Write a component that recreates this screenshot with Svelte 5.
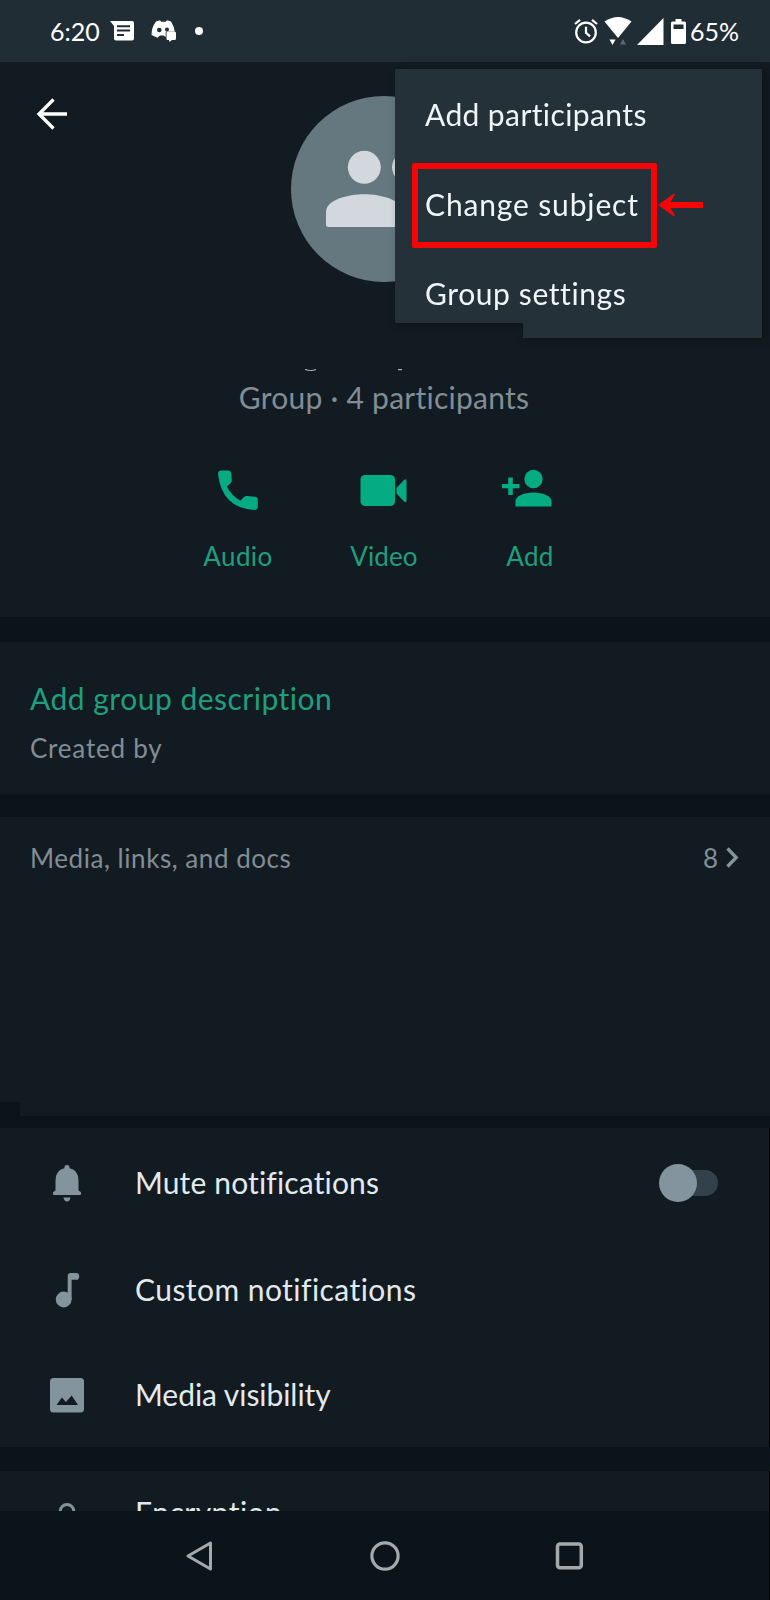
<script>
    const menuItems = [
        { label: "Add participants", spacing: 0.4 },
        { label: "Change subject", spacing: 0.85 },
        { label: "Group settings", spacing: 0.6 }
    ];

    let muted = false;
</script>

<main>
    <header class="status-bar">
        <span class="clock">6:20</span>
        <svg class="s-message" width="25" height="22" viewBox="0 0 25 22">
            <path fill="#fff" d="M0 1h22q2 0 2 2v15.500q0 2-2 2H6q-2 0-2-2V6z" />
            <path stroke="#212d35" stroke-width="2" d="M7 6.300h13M7 10.600h13M7 15h7" />
        </svg>
        <svg class="s-discord" width="26" height="24" viewBox="0 0 26 24">
            <path fill="#fff" d="M5 2.500 9 1.200l1.200 1.500h4.600L16 1.200l4 1.300q3.200 5 3.700 10h-9v5.500l-2.200-1.500H9l-2.500 2.300L.5 16Q.4 8.500 5 2.500z" />
            <circle cx="8.300" cy="11" r="2.300" fill="#212d35" />
            <circle cx="16" cy="10.500" r="2" fill="#212d35" />
            <path fill="#fff" d="M16.500 12.500h7q1.500 0 1.500 1.500v5.500q0 1.500-1.500 1.500H21l-2.500 2-.5-2h-1.500q-1 0-1-1.500V14q0-1.500 1-1.500z" />
        </svg>
        <span class="dot"></span>

        <div class="status-right">
            <svg class="s-alarm" width="24" height="26" viewBox="0 0 24 26">
                <g fill="none" stroke="#fff" stroke-width="2.200">
                    <circle cx="12" cy="14.500" r="9.800" />
                    <path d="M12 8.800v6l4 3.500M1 6 6 1.900M23 6l-5-4.100" />
                </g>
            </svg>
            <svg class="s-wifi" width="28" height="30" viewBox="0 0 28 30">
                <path fill="#fff" d="M.5 5.500Q14-3.500 27.500 5.500L14 22z" />
                <path fill="#fff" d="M5.500 23.500h6L8.500 29z" />
                <path fill="#5d686e" d="M16 28.500h6L19 23z" />
            </svg>
            <svg class="s-signal" width="27" height="27" viewBox="0 0 27 27">
                <path fill="#fff" d="M26.500 0v27H0z" />
            </svg>
            <svg class="s-battery" width="15" height="25" viewBox="0 0 15 25">
                <path fill="#fff" d="M4.500 0h6v2.500h3q1.500 0 1.500 1.500v19.500q0 1.500-1.500 1.500h-12Q0 25 0 23.500V4q0-1.500 1.500-1.500h3z" />
                <path fill="#212d35" d="M2.500 5.500h10V10h-10z" />
            </svg>
            <span class="percent">65%</span>
        </div>
    </header>

    <section class="profile">
        <div class="profile-top">
            <button class="back" aria-label="Back">
                <svg width="32" height="32" viewBox="0 0 32 32">
                    <path fill="none" stroke="#fff" stroke-width="3.300" d="M31 16H3M17.500 1.500 3 16l14.500 14.500" />
                </svg>
            </button>
            <svg class="avatar" width="186" height="186" viewBox="0 0 186 186">
                <circle cx="93" cy="93" r="93" fill="#66787f" />
                <g fill="#d2d8de">
                    <circle cx="73.300" cy="71.300" r="16.500" />
                    <path d="M35 116c0-12 22-17.700 38.300-17.700S111.600 104 111.600 116v15H37.500q-2.500 0-2.500-2.500z" />
                    <circle cx="117.500" cy="71.300" r="16.500" />
                </g>
            </svg>
        </div>
        <!-- bottom edge of the hidden group name -->
        <svg class="name-rest" width="100" height="4" viewBox="0 0 100 4">
            <path fill="none" stroke="#a9b0b5" stroke-width="1.200" d="M1 .5q6 2 11 0M94 .7h4" />
        </svg>
        <p class="members">Group · 4 participants</p>

        <div class="actions">
            <button class="action audio">
                <svg width="50" height="44" viewBox="0 0 50 44">
                    <path fill="#05ab83" d="M8 2.500h7.500q2.500 0 2.700 2.500l.6 7q.1 2-1.200 3.200l-3.800 3.600q5 9 13.500 14l3.700-3.800q1.200-1.200 3.200-1l8 .8q2.600.3 2.600 2.800v7q0 3.300-3.300 3.300Q9 40.500 5 6q0-3.500 3-3.500z" />
                </svg>
                <span>Audio</span>
            </button>
            <button class="action video">
                <svg width="50" height="44" viewBox="0 0 50 44">
                    <rect x="1.500" y="7" width="34.500" height="31" rx="4.500" fill="#05ab83" />
                    <path fill="#05ab83" d="M37.500 20 45 12q2.500-1.800 2.500.8v20q0 2.600-2.500.8L37.500 25.500z" />
                </svg>
                <span>Video</span>
            </button>
            <button class="action add">
                <svg width="50" height="44" viewBox="3 0 50 44">
                    <g fill="#05ab83">
                        <circle cx="31.500" cy="11" r="9.200" />
                        <path d="M13.500 38.500V33c0-5 9-8.500 18-8.500s18 3.500 18 8.500v5.500z" />
                        <path d="M6.200 9.500h4.600V16h6.700v4.300h-6.700V27H6.200v-6.700H0V16h6.200z" />
                    </g>
                </svg>
                <span>Add</span>
            </button>
        </div>
    </section>

    <section class="description">
        <p class="add-description">Add group description</p>
        <p class="created">Created by</p>
    </section>

    <section class="media">
        <div class="media-row">
            <span class="media-label">Media, links, and docs</span>
            <span class="count">8</span>
            <svg width="13" height="21" viewBox="0 0 13 21">
                <path fill="none" stroke="#87949c" stroke-width="3.300" d="m1.500 1.500 8.700 9-8.700 9" />
            </svg>
        </div>
        <div class="media-corner"></div>
    </section>

    <section class="settings">
        <div class="setting">
            <svg width="36" height="38" viewBox="0 0 36 38">
                <path fill="#84949c" d="M18 1q2.500 0 2.700 3.300 8.800 2 8.800 12.200v10l2.300 1.500q1 3-1 3H5.200q-2 0-1-3l2.300-1.500v-10q0-10.200 8.800-12.200Q15.500 1 18 1zM14.500 33.500h7q-.7 4-3.500 4t-3.500-4z" />
            </svg>
            <span class="mute">Mute notifications</span>
            <button class="toggle" class:on={muted} aria-label="Mute notifications" on:click={() => (muted = !muted)}>
                <span class="knob"></span>
            </button>
        </div>
        <div class="setting">
            <svg width="36" height="38" viewBox="0 0 36 38">
                <circle cx="14.700" cy="28.500" r="7.900" fill="#84949c" />
                <path fill="#84949c" d="M18.700 5q0-3 3-3h5.500q3 0 3 3.400t-3 3.400h-4.600v20h-3.900z" />
            </svg>
            <span class="custom">Custom notifications</span>
        </div>
        <div class="setting">
            <svg width="36" height="38" viewBox="0 0 36 38">
                <rect x="1" y="2" width="34" height="34.500" rx="3.500" fill="#84949c" />
                <path fill="#121b22" d="m7.500 29 5.400-7.500 4 4.500 5.800-6.500 6.300 9.500z" />
            </svg>
            <span class="visibility">Media visibility</span>
        </div>
    </section>

    <section class="encryption">
        <div class="setting">
            <svg width="36" height="38" viewBox="0 0 36 38">
                <path fill="none" stroke="#84949c" stroke-width="3" d="M11.200 22v-5.700a6.800 6.800 0 0 1 13.600 0V22" />
                <rect x="5" y="21" width="26" height="16" rx="3" fill="#84949c" />
            </svg>
            <span class="encrypted">Encryption</span>
        </div>
    </section>

    <nav class="navbar">
        <button aria-label="Back">
            <svg width="30" height="34" viewBox="0 0 30 34">
                <path fill="none" stroke="#a3aaae" stroke-width="3" stroke-linejoin="round" d="M25.500 4v26L3 17z" />
            </svg>
        </button>
        <button aria-label="Home">
            <svg width="34" height="34" viewBox="0 0 34 34">
                <circle cx="17" cy="17" r="13.100" fill="none" stroke="#a3aaae" stroke-width="3.200" />
            </svg>
        </button>
        <button aria-label="Recent apps">
            <svg width="30" height="34" viewBox="0 0 30 34">
                <rect x="2.500" y="5" width="23.800" height="23.800" rx="2.500" fill="none" stroke="#a3aaae" stroke-width="3.500" />
            </svg>
        </button>
    </nav>

    <div class="menu-wrap">
        <ul class="menu">
            {#each menuItems as item}
                <li style="letter-spacing: {item.spacing}px">{item.label}</li>
            {/each}
        </ul>
    </div>
    <div class="highlight"></div>
    <svg class="arrow" width="46" height="24" viewBox="0 0 46 24">
        <path fill="#f50505" d="M0 12 16 .5l.8 1.500L12.500 9H45v6H12.500l4.300 7-.8 1.500z" />
    </svg>
</main>

<style>
    :global(body) {
        margin: 0;
        background: #0b141b;
    }

    main {
        position: relative;
        width: 770px;
        height: 1600px;
        overflow: hidden;
        display: flex;
        flex-direction: column;
        background: #0b141b;
        font-family: Lato, "Open Sans", sans-serif;
        font-size: 30px;
        line-height: 36px;
        color: #e3eaee;
    }

    p, ul {
        margin: 0;
        padding: 0;
    }

    svg {
        flex: none;
        display: block;
    }

    button {
        font: inherit;
        background: none;
        border: none;
        padding: 0;
    }

    section {
        box-sizing: border-box;
        flex: none;
        background: #121b22;
    }

    /* status bar */
    .status-bar {
        box-sizing: border-box;
        display: flex;
        align-items: center;
        height: 62px;
        flex: none;
        padding: 0 31px 0 50px;
        background: #212d35;
        color: #fff;
        font-size: 25px;
    }

    .clock, .percent {
        margin-top: -1px;
    }

    .s-message {
        margin-left: 10px;
    }

    .s-discord {
        margin-left: 16px;
    }

    .dot {
        width: 8px;
        height: 8px;
        margin-left: 18px;
        border-radius: 50%;
        background: #fff;
    }

    .status-right {
        display: flex;
        align-items: center;
        margin-left: auto;
    }

    .s-wifi {
        margin-left: 6px;
    }

    .s-signal {
        margin-left: 5px;
    }

    .s-battery {
        margin: 0 4px 0 7px;
    }

    /* group header */
    .profile {
        height: 555px;
        display: flex;
        flex-direction: column;
        align-items: center;
        padding: 34px 2px 0 0;
    }

    .profile-top {
        width: 100%;
        display: grid;
        grid-template-columns: 1fr 186px 1fr;
        align-items: start;
    }

    .back {
        margin: 2px 0 0 36px;
        justify-self: start;
    }

    .name-rest {
        margin: 87px 60px 0 0;
    }

    .members {
        margin-top: 6px;
        color: #828d95;
        letter-spacing: 0.25px;
    }

    .actions {
        display: flex;
        margin-top: 53px;
    }

    .action {
        width: 146px;
        display: flex;
        flex-direction: column;
        align-items: center;
        gap: 26px;
        color: #1f9f7e;
        font-size: 26px;
    }

    .action svg {
        overflow: visible;
    }

    .audio, .add {
        letter-spacing: 0.4px;
    }

    .video {
        letter-spacing: 0.1px;
    }

    /* description */
    .description {
        height: 152px;
        margin-top: 25px;
        padding: 38px 30px 0;
    }

    .add-description {
        color: #1f9f7e;
        letter-spacing: 0.5px;
    }

    .created {
        margin-top: 14px;
        font-size: 26px;
        color: #828d95;
        letter-spacing: 0.8px;
    }

    /* media */
    .media {
        height: 299px;
        margin-top: 23px;
        display: flex;
        flex-direction: column;
    }

    .media-row {
        display: flex;
        align-items: center;
        padding: 23px 31px 0 30px;
        font-size: 26px;
        color: #828d95;
    }

    .media-row svg {
        margin-top: -1px;
    }

    .media-label {
        letter-spacing: 0.55px;
    }

    .count {
        margin: 0 8px 0 auto;
    }

    .media-corner {
        width: 20px;
        height: 14px;
        margin-top: auto;
        background: #0b141b;
    }

    /* settings */
    .settings {
        margin-top: 12px;
        height: 319px;
        display: grid;
        grid-template-rows: 107px 107px 103px;
        border-right: 1px solid #000;
    }

    .setting {
        display: flex;
        align-items: center;
        padding: 0 51px 0 49px;
    }

    .setting svg {
        margin: 3px 50px 0 0;
    }

    .mute {
        letter-spacing: 0.15px;
    }

    .custom, .encrypted {
        letter-spacing: 0.45px;
    }

    .visibility {
        letter-spacing: -0.05px;
    }

    .toggle {
        width: 56px;
        height: 26px;
        margin: 2px 0 0 auto;
        border-radius: 13px;
        background: #33424a;
        display: flex;
        align-items: center;
    }

    .toggle.on {
        background: #05ab83;
        justify-content: flex-end;
    }

    .knob {
        width: 38px;
        height: 38px;
        margin-left: -3px;
        flex: none;
        border-radius: 50%;
        background: #84949f;
    }

    .encryption {
        margin-top: 24px;
        height: 40px;
        overflow: hidden;
        border-right: 1px solid #000;
    }

    .encryption .setting {
        height: 82px;
    }

    .navbar {
        flex: 1;
        display: grid;
        grid-template-columns: repeat(3, 185px);
        justify-content: center;
        align-items: center;
        border-right: 1px solid #000;
    }

    .navbar button {
        justify-self: center;
    }

    /* dropdown */
    .menu-wrap {
        position: absolute;
        left: 395px;
        top: 69px;
        filter: drop-shadow(3px 2px 4px rgba(0, 0, 0, 0.3));
    }

    .menu {
        box-sizing: border-box;
        width: 367px;
        height: 269px;
        padding-top: 1px;
        list-style: none;
        background: #243139;
        color: #eef5f8;
        clip-path: polygon(0 0, 100% 0, 100% 100%, 128px 100%, 128px 254px, 0 254px);
    }

    .menu li {
        height: 89.5px;
        line-height: 89.5px;
        padding-left: 30px;
    }

    .highlight {
        position: absolute;
        left: 412px;
        top: 163px;
        width: 233px;
        height: 73px;
        border: 6px solid #f50505;
        border-radius: 2px;
    }

    .arrow {
        position: absolute;
        left: 658px;
        top: 193px;
    }
</style>
